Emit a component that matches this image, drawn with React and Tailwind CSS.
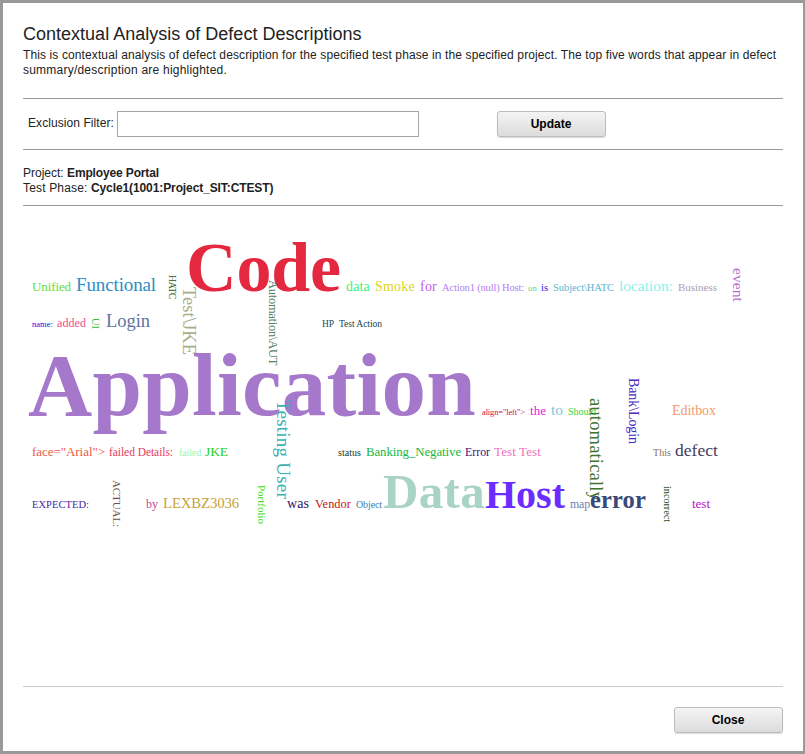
import { useLayoutEffect, useRef } from "react";

// x / y: start of the word on its baseline, length: extent along the reading direction.
const words = [
  { t: "Unified", x: 32, y: 291, length: 39, size: 13, color: "#5fdc3c" },
  { t: "Functional", x: 76, y: 291, length: 80, size: 19, color: "#2f8ec4" },
  { t: "HATC", x: 169, y: 275, length: 24, size: 10, color: "#2a5a2a", v: true },
  { t: "Code", x: 186, y: 291, length: 155, size: 70, color: "#e32840", bold: true },
  { t: "Test\\JKE", x: 183, y: 287, length: 68, size: 18.5, color: "#a9ae88", v: true },
  { t: "Automation\\AUT", x: 269, y: 280, length: 85, size: 12.5, color: "#4f8169", v: true },
  { t: "data", x: 346, y: 291, length: 24, size: 14, color: "#3fee7c" },
  { t: "Smoke", x: 375, y: 291, length: 40, size: 14, color: "#e0d21c" },
  { t: "for", x: 420, y: 291, length: 17, size: 14, color: "#c45fe6" },
  { t: "Action1 (null) Host:", x: 442, y: 291, length: 82, size: 10.5, color: "#b180f2" },
  { t: "on", x: 528, y: 291, length: 9, size: 8.5, color: "#4bd68a" },
  { t: "is", x: 541, y: 291, length: 7, size: 10.5, color: "#1818ee" },
  { t: "Subject\\HATC", x: 553, y: 291, length: 61, size: 10.5, color: "#5cb4d0" },
  { t: "location:", x: 619, y: 291, length: 54, size: 15.5, color: "#86f2ee" },
  { t: "Business", x: 678, y: 291, length: 39, size: 11, color: "#a99fb4" },
  { t: "event", x: 733, y: 268, length: 34, size: 15.5, color: "#b96fca", v: true },
  { t: "name:", x: 32, y: 327, length: 21, size: 8.5, color: "#1c10dc" },
  { t: "added", x: 57, y: 327, length: 29, size: 12, color: "#f04a8c" },
  { t: "UI", x: 92, y: 318, length: 11, size: 10.5, color: "#3cbc3c", v: true },
  { t: "Login", x: 106, y: 327, length: 44, size: 18.5, color: "#5f74a0" },
  { t: "HP", x: 322, y: 327, length: 12, size: 9.5, color: "#164a5c" },
  { t: "Test Action", x: 339, y: 327, length: 43, size: 9.5, color: "#0e4450" },
  { t: "Application", x: 28, y: 415, length: 448, size: 89, color: "#a678cb", bold: true },
  { t: "align=\"left\">", x: 482, y: 415, length: 43, size: 8.5, color: "#cf0a54" },
  { t: "the", x: 530, y: 415, length: 16, size: 13, color: "#ee18dc" },
  { t: "to", x: 551, y: 415, length: 12, size: 15.5, color: "#82c8dc" },
  { t: "Should", x: 568, y: 415, length: 28, size: 10, color: "#2fd83c" },
  { t: "automatically", x: 590, y: 398, length: 103, size: 18.5, color: "#3f7332", v: true },
  { t: "Bank\\Login", x: 629, y: 378, length: 66, size: 14, color: "#452cc0", v: true },
  { t: "Editbox", x: 672, y: 415, length: 44, size: 14, color: "#f29a6c" },
  { t: "face=\"Arial\">", x: 32, y: 456, length: 73, size: 13, color: "#f05a48" },
  { t: "failed Details:", x: 109, y: 456, length: 64, size: 11.5, color: "#e43a60" },
  { t: "failed", x: 179, y: 456, length: 22, size: 10, color: "#98f8b4" },
  { t: "JKE", x: 205, y: 456, length: 23, size: 13.5, color: "#1cd020" },
  { t: "Testing User", x: 277, y: 400, length: 99, size: 19, color: "#3cb2b0", v: true },
  { t: "status", x: 338, y: 456, length: 23, size: 10, color: "#20381c" },
  { t: "Banking_Negative", x: 366, y: 456, length: 95, size: 12.8, color: "#14b83c" },
  { t: "Error", x: 465, y: 456, length: 25, size: 11.8, color: "#3c107c" },
  { t: "Test Test", x: 494, y: 456, length: 47, size: 13, color: "#f070bc" },
  { t: "This", x: 653, y: 456, length: 18, size: 10, color: "#8c6e5c" },
  { t: "defect", x: 675, y: 456, length: 43, size: 17.5, color: "#443c5c" },
  { t: "EXPECTED:", x: 32, y: 508, length: 57, size: 10.5, color: "#4c24a0" },
  { t: "ACTUAL:", x: 113, y: 480, length: 47, size: 11, color: "#6e4e50", v: true },
  { t: "by", x: 146, y: 508, length: 12, size: 12, color: "#c44898" },
  { t: "LEXBZ3036", x: 163, y: 508, length: 76, size: 14.8, color: "#c8a038" },
  { t: "Portfolio", x: 258, y: 485, length: 39, size: 11, color: "#40e028", v: true },
  { t: "was", x: 287, y: 508, length: 22, size: 14, color: "#2c1464" },
  { t: "Vendor", x: 315, y: 508, length: 36, size: 12.3, color: "#c01818" },
  { t: "Object", x: 356, y: 508, length: 26, size: 10, color: "#3c80b0" },
  { t: "Data", x: 383, y: 508, length: 102, size: 49, color: "#a9d3c5", bold: true },
  { t: "Host", x: 485, y: 508, length: 80, size: 40, color: "#6c2cff", bold: true },
  { t: "map", x: 570, y: 508, length: 20, size: 11.8, color: "#7080b0" },
  { t: "error", x: 590, y: 508, length: 56, size: 24.5, color: "#384878", bold: true },
  { t: "incorrect", x: 664, y: 486, length: 36, size: 10.3, color: "#24501c", v: true },
  { t: "test", x: 692, y: 508, length: 18, size: 13, color: "#b810c8" },
];

const CLOUD_LEFT = 23;
const CLOUD_TOP = 206;

// Distance from the top of a line box of height 1em to the serif baseline.
function baselineOffset(size) {
  const ascent = Math.round(size * 0.891);
  const descent = Math.round(size * 0.216);
  return Math.floor(ascent + (size - ascent - descent) / 2);
}

function Word({ t, x, y, length, size, color, bold, v }) {
  const ref = useRef(null);
  // Spread the letters so that the word takes up its allotted length.
  useLayoutEffect(() => {
    const el = ref.current;
    el.style.letterSpacing = "0px";
    const natural = parseFloat(getComputedStyle(el).width) || length;
    el.style.letterSpacing = `${(length - natural) / t.length}px`;
  }, [t, length]);
  const offset = baselineOffset(size);
  return (
    <span
      ref={ref}
      className={`absolute block origin-top-left whitespace-pre leading-none ${bold ? "font-bold" : "font-normal"}`}
      style={{
        left: x - CLOUD_LEFT + (v ? offset : 0),
        top: y - CLOUD_TOP - (v ? 0 : offset),
        fontSize: size,
        color,
        transform: v ? "rotate(90deg)" : undefined,
      }}
    >
      {t}
    </span>
  );
}

function Button({ children }) {
  return (
    <button className="h-[26px] w-[109px] rounded-[3px] border border-[#bdbdbd] bg-linear-to-b from-[#f4f4f4] to-[#dcdcdc] pr-px text-center text-xs font-bold text-black shadow-[0_1px_1px_rgba(0,0,0,0.15)]">
      {children}
    </button>
  );
}

export default function App() {
  return (
    <div className="flex h-[754px] w-[805px] flex-col border-t-[3px] border-r-2 border-b-[3px] border-l-[3px] border-[#999] bg-white px-5 font-['Liberation_Sans',Arial,sans-serif] text-xs leading-[15px] text-[#222]">
      <header className="h-[95px] pt-5">
        <h1 className="h-[25px] text-[18px] leading-[22px] tracking-[0.01px] whitespace-nowrap">
          Contextual Analysis of Defect Descriptions
        </h1>
        <p className="whitespace-nowrap">
          <span className="tracking-[0.112px]">
            This is contextual analysis of defect description for the specified test phase in the specified project. The top five words that appear in defect
          </span>
          <br />
          <span className="tracking-[0.22px]">summary/description are highlighted.</span>
        </p>
      </header>
      <form className="flex h-[51px] w-[760px] items-start border-t border-[#999] pt-3 pl-[5px]">
        <label className="w-[89px] pt-[5px] tracking-[0.07px] whitespace-nowrap">Exclusion Filter:</label>
        <input className="h-[26px] w-[302px] border border-[#a5a5a5] bg-white" />
        <div className="ml-[78px]">
          <Button>Update</Button>
        </div>
      </form>
      <section className="h-[57px] w-[760px] border-y border-[#999] pt-[16px]">
        <p>Project: <b className="tracking-[-0.14px]">Employee Portal</b></p>
        <p>
          <span className="tracking-[0.16px]">Test Phase: </span>
          <b className="tracking-[-0.1px]">Cycle1(1001:Project_SIT:CTEST)</b>
        </p>
      </section>
      <main className="relative h-[480px] w-[760px] font-['Liberation_Serif','Times_New_Roman',serif]">
        {words.map((w) => (
          <Word key={w.t} {...w} />
        ))}
      </main>
      <footer className="flex w-[760px] justify-end border-t border-[#ccc] pt-5">
        <Button>Close</Button>
      </footer>
    </div>
  );
}
